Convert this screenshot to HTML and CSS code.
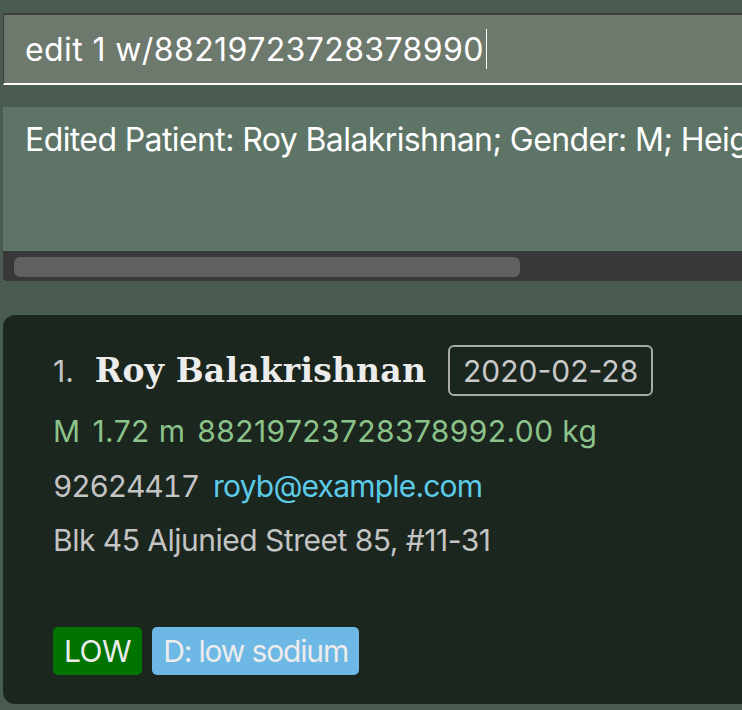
FILE: index.html
```html
<!DOCTYPE html>
<html>
<head>
<meta charset="utf-8">
<link rel="stylesheet" href="styles.css">
</head>
<body>
<div class="app">
  <div class="command">
    <span class="command-text">edit 1 w/88219723728378990</span><span class="caret"></span>
  </div>
  <div class="result">
    <div class="result-text">Edited Patient: Roy Balakrishnan; Gender: M; Height: 1.72 m; Weight: 88219723728378992.00 kg; Phone: 92624417</div>
    <div class="scroll-track"><div class="scroll-thumb"></div></div>
  </div>
  <div class="card">
    <div class="title-row">
      <span class="index">1.</span>
      <span class="name">Roy Balakrishnan</span>
      <span class="date">2020-02-28</span>
    </div>
    <div class="row stats"><span>M</span><span>1.72 m</span><span>88219723728378992.00 kg</span></div>
    <div class="row contact"><span class="phone">92624417</span><span class="email">royb@example.com</span></div>
    <div class="row address">Blk 45 Aljunied Street 85, #11-31</div>
    <div class="tags">
      <span class="tag tag-low">LOW</span>
      <span class="tag tag-diet">D: low sodium</span>
    </div>
  </div>
</div>
</body>
</html>
```
FILE: styles.css
```css
html, body {
  margin: 0;
  padding: 0;
  background: #4a5c51;
  overflow: hidden;
  width: 742px;
  height: 710px;
}
.app {
  padding-left: 3px;
  padding-top: 13px;
  width: 1000px;
  font-family: Inter, "Noto Sans", sans-serif;
}
.command {
  height: 68px;
  background: #6e796d;
  border-top: 2px solid #3b3e3b;
  border-left: 1px solid #3b3e3b;
  border-bottom: 2px solid #ffffff;
  display: flex;
  align-items: center;
  padding-left: 21px;
  box-sizing: content-box;
}
.command-text {
  color: #ffffff;
  font-size: 32px;
  letter-spacing: 0.4px;
}
.caret {
  width: 1px;
  height: 40px;
  background: #ffffff;
  margin-left: 2px;
}
.result {
  margin-top: 22px;
  background: #5d7466;
}
.result-text {
  height: 144px;
  box-sizing: border-box;
  padding: 13px 0 0 22px;
  color: #ffffff;
  font-size: 32px;
  letter-spacing: -0.6px;
  white-space: nowrap;
  overflow: hidden;
  width: 739px;
}
.scroll-track {
  height: 30px;
  background: #383838;
  padding: 6px 0 0 11px;
  box-sizing: border-box;
  border-bottom-left-radius: 3px;
}
.scroll-thumb {
  width: 506px;
  height: 20px;
  background: #606060;
  border-radius: 6px;
}
.card {
  margin-top: 34px;
  background: #1b261f;
  border-radius: 12px;
  height: 389px;
  box-sizing: border-box;
  padding: 30px 0 0 50px;
}
.title-row {
  display: flex;
  align-items: center;
  height: 51px;
}
.index {
  color: #c4c4c4;
  font-size: 30px;
  margin-right: 21px;
  letter-spacing: 0;
}
.name {
  font-family: "DejaVu Serif", serif;
  font-weight: bold;
  color: #ececec;
  font-size: 33px;
  letter-spacing: 0.2px;
  margin-right: 22px;
}
.date {
  border: 2px solid #a9aba9;
  border-radius: 6px;
  color: #c9c9c9;
  font-size: 30px;
  box-sizing: border-box;
  padding: 0 13px;
  display: flex;
  align-items: center;
  height: 51px;
  letter-spacing: 0;
}
.row {
  font-size: 30px;
  line-height: 54px;
  display: flex;
  gap: 12px;
}
.stats {
  color: #8cc38a;
  margin-top: 8px;
  letter-spacing: 0.4px;
}
.contact {
  letter-spacing: -0.8px;
  margin-top: 1px;
  gap: 14px;
}
.contact .phone {
  color: #c4c4c4;
  font-variant-numeric: tabular-nums;
  letter-spacing: -1.2px;
}
.contact .email { color: #5ccbe8; }
.address {
  color: #c4c4c4;
  letter-spacing: -0.5px;
}
.tags {
  margin-top: 60px;
  display: flex;
  gap: 10px;
}
.tag {
  height: 48px;
  display: flex;
  align-items: center;
  padding: 0 11px;
  border-radius: 5px;
  color: #ececec;
  font-size: 30px;
  letter-spacing: -0.5px;
}
.tag-low { background: #007300; }
.tag-diet {
  background: #6db8e5;
  letter-spacing: -1.15px;
}
```
